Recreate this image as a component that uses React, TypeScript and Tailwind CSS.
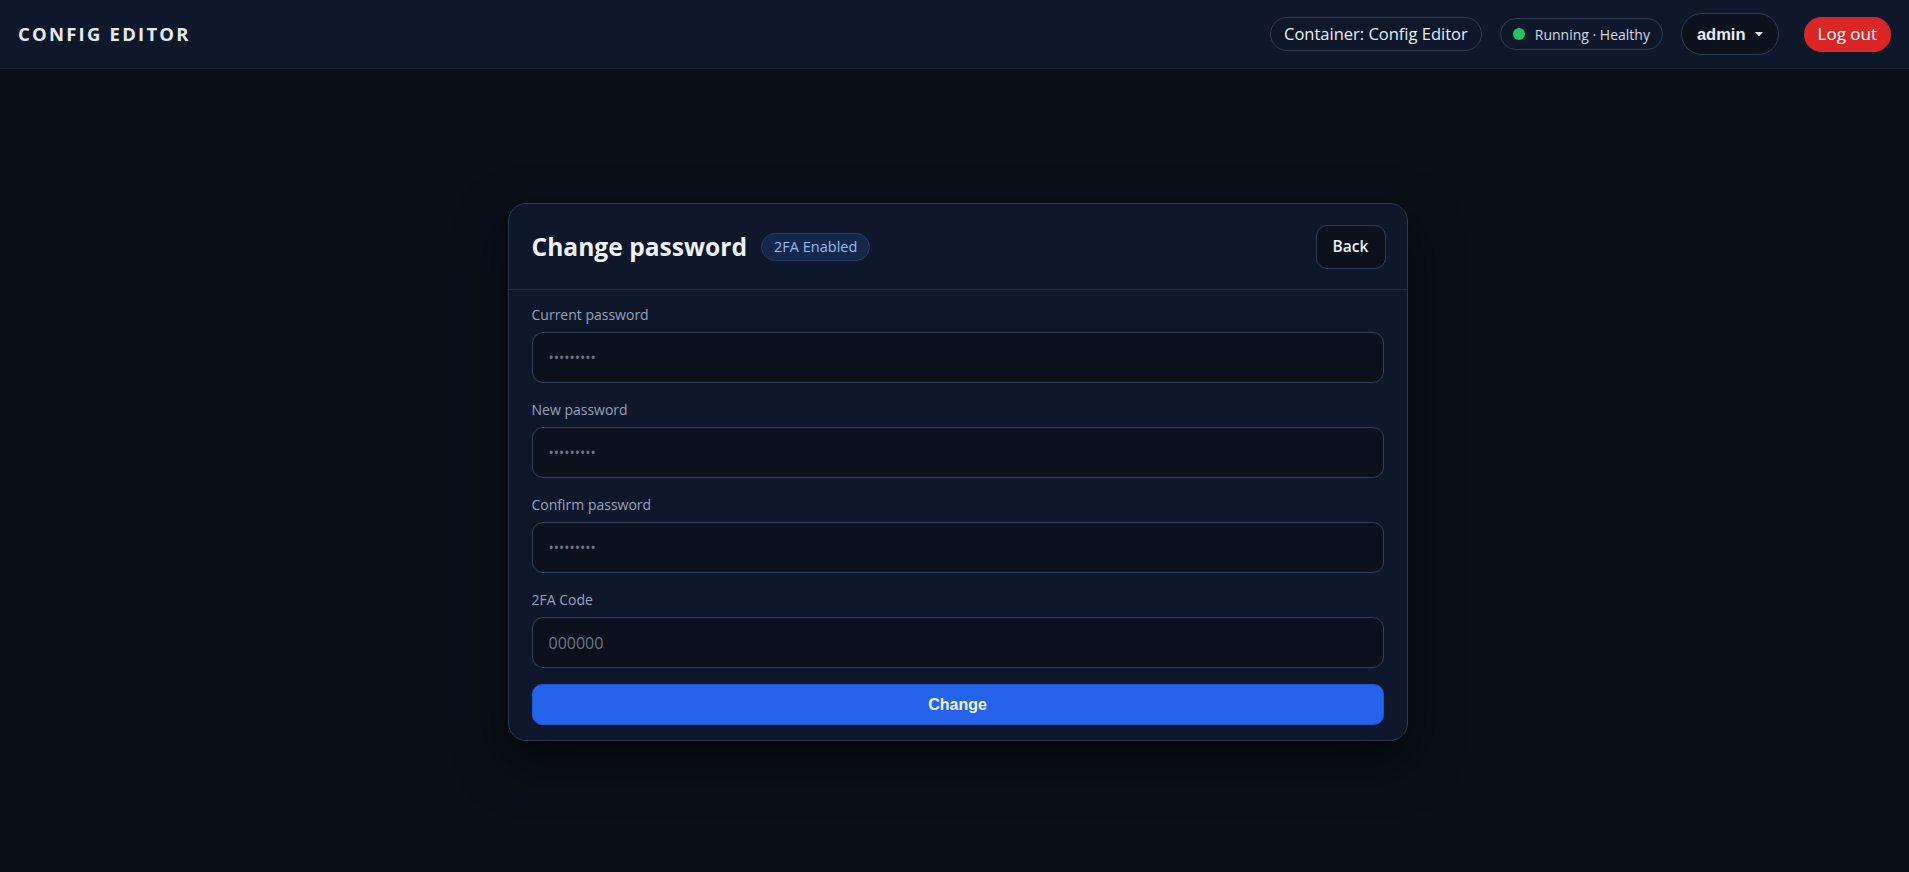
import React, { useState } from 'react'

const Field: React.FC<{
  label: string
  type?: string
  placeholder: string
  value: string
  onChange: (v: string) => void
}> = ({ label, type = 'password', placeholder, value, onChange }) => (
  <div className="flex flex-col">
    <label className="mb-2 text-[14px] leading-[18px] text-[#93a3bb]">{label}</label>
    <input
      type={type}
      value={value}
      placeholder={placeholder}
      onChange={e => onChange(e.target.value)}
      className={
        type === 'password'
          ? 'h-[51px] w-full rounded-[11px] border border-[#314057] bg-[#0b111d] px-4 text-[14px] text-[#e2e8f0] outline-none placeholder:text-[#6b7689]'
          : 'h-[51px] w-full rounded-[11px] border border-[#314057] bg-[#0b111d] px-4 text-[16px] text-[#e2e8f0] outline-none placeholder:text-[#6b7689]'
      }
    />
  </div>
)

export default function App() {
  const [current, setCurrent] = useState('')
  const [next, setNext] = useState('')
  const [confirm, setConfirm] = useState('')
  const [code, setCode] = useState('')

  return (
    <div
      className="min-h-[872px] w-full bg-[#0a0f19] text-[#e2e8f0]"
      style={{ fontFamily: '"Open Sans", "Noto Sans", sans-serif' }}
    >
      <header className="flex h-[69px] items-center justify-between border-b border-[#17213a] bg-[#0f182b] px-[18px]">
        <div className="text-[18.5px] font-bold tracking-[0.12em] text-[#e5e9f0]">CONFIG EDITOR</div>
        <div className="flex items-center gap-[18px]">
          <div className="flex h-[34px] items-center rounded-full border border-[#2f3b50] px-[13px] text-[16.5px] text-[#e8edf4]">
            Container: Config Editor
          </div>
          <div className="flex h-[32px] items-center gap-[10px] rounded-full border border-[#2f3b50] px-[12px] text-[14px] text-[#cfd8e3]">
            <span className="h-[12px] w-[12px] rounded-full bg-[#22c55e]" />
            Running · Healthy
          </div>
          <button
            className="flex h-[42px] items-center gap-[9px] rounded-full border border-[#2f3b50] bg-[#0b111d] px-[15px] text-[16.5px] font-bold text-[#e8edf4]"
            style={{ fontFamily: '"Liberation Sans", Arial, sans-serif' }}
          >
            admin
            <svg width="8" height="5" viewBox="0 0 8 5" className="mt-[1px]">
              <path d="M0 0h8L4 4.5z" fill="#e2e8f0" />
            </svg>
          </button>
          <button className="ml-[7px] flex h-[35px] items-center rounded-full bg-[#dc2626] px-[14px] text-[17px] text-white">
            Log out
          </button>
        </div>
      </header>

      <div className="flex justify-center pl-[6px] pt-[134px]">
        <div className="w-[900px] rounded-[18px] border border-[#2b384d] bg-[#0f172a] shadow-[0_20px_50px_rgba(0,0,0,0.55)]">
          <div className="flex items-center justify-between border-b border-[#1f2a3d] pb-[20px] pl-[23px] pr-[21px] pt-[21px]">
            <div className="flex items-center gap-[14px]">
              <h1 className="text-[24.6px] font-bold leading-none text-[#eef1f6]">Change password</h1>
              <span className="flex h-[28px] items-center rounded-full border border-[#233d63] bg-[#14284a] px-[12px] text-[14.5px] text-[#8fbcf5]">
                2FA Enabled
              </span>
            </div>
            <button className="flex h-[44px] w-[70px] items-center justify-center rounded-[11px] border border-[#2f3b50] bg-[#0b111d] text-[15.5px] font-semibold text-[#eef1f6]">
              Back
            </button>
          </div>
          <div className="flex flex-col gap-[18px] px-[23px] pb-[15px] pt-[16px]">
            <Field label="Current password" placeholder="•••••••••" value={current} onChange={setCurrent} />
            <Field label="New password" placeholder="•••••••••" value={next} onChange={setNext} />
            <Field label="Confirm password" placeholder="•••••••••" value={confirm} onChange={setConfirm} />
            <Field label="2FA Code" type="text" placeholder="000000" value={code} onChange={setCode} />
            <button
              className="-mt-[2px] h-[41px] w-full rounded-[10px] border border-[#1f55d0] bg-[#2563eb] text-[16px] font-bold text-[#f1f5fb]"
              style={{ fontFamily: '"Liberation Sans", Arial, sans-serif' }}
            >
              Change
            </button>
          </div>
        </div>
      </div>
    </div>
  )
}
